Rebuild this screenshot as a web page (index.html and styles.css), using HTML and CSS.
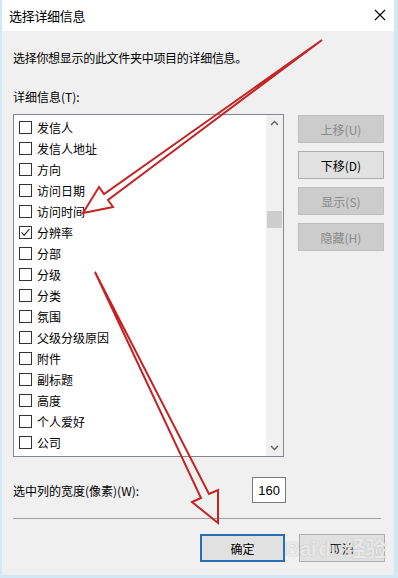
FILE: index.html
```html
<!DOCTYPE html>
<html lang="zh-CN">
<head>
    <meta charset="UTF-8">
    <title>选择详细信息</title>
    <link rel="stylesheet" href="styles.css">
</head>
<body>
    <div class="window">
        <div class="titlebar">
            <span class="title">选择详细信息</span>
            <svg class="close" width="12" height="12" viewBox="0 0 12 12">
                <path d="M1 1 L11 11 M11 1 L1 11" stroke="#000" stroke-width="1.1"/>
            </svg>
        </div>

        <div class="content">
            <p class="desc">选择你想显示的此文件夹中项目的详细信息。</p>
            <p class="label">详细信息(T):</p>

            <div class="main">
                <div class="list">
                    <ul class="items">
                        <li><span class="box"></span>发信人</li>
                        <li><span class="box"></span>发信人地址</li>
                        <li><span class="box"></span>方向</li>
                        <li><span class="box"></span>访问日期</li>
                        <li><span class="box"></span>访问时间</li>
                        <li><span class="box checked"><svg width="11" height="11" viewBox="0 0 11 11"><path d="M1.5 5.5 L4.2 8.2 L9.5 2" fill="none" stroke="#222" stroke-width="1.1"/></svg></span>分辨率</li>
                        <li><span class="box"></span>分部</li>
                        <li><span class="box"></span>分级</li>
                        <li><span class="box"></span>分类</li>
                        <li><span class="box"></span>氛围</li>
                        <li><span class="box"></span>父级分级原因</li>
                        <li><span class="box"></span>附件</li>
                        <li><span class="box"></span>副标题</li>
                        <li><span class="box"></span>高度</li>
                        <li><span class="box"></span>个人爱好</li>
                        <li><span class="box"></span>公司</li>
                    </ul>
                    <div class="scrollbar">
                        <svg class="arrow" width="17" height="17" viewBox="0 0 17 17">
                            <path d="M5 10 L8.5 6.5 L12 10" fill="none" stroke="#606060" stroke-width="1.4"/>
                        </svg>
                        <div class="track">
                            <div class="thumb"></div>
                        </div>
                        <svg class="arrow" width="17" height="17" viewBox="0 0 17 17">
                            <path d="M5 7 L8.5 10.5 L12 7" fill="none" stroke="#606060" stroke-width="1.4"/>
                        </svg>
                    </div>
                </div>

                <div class="side">
                    <button class="btn disabled">上移(U)</button>
                    <button class="btn">下移(D)</button>
                    <button class="btn disabled">显示(S)</button>
                    <button class="btn disabled">隐藏(H)</button>
                </div>
            </div>

            <div class="width-row">
                <span>选中列的宽度(像素)(W):</span>
                <input class="width-input" type="text" value="160">
            </div>

            <div class="separator"></div>

            <div class="footer">
                <button class="btn default">确定</button>
                <button class="btn">取消</button>
            </div>
        </div>

        <div class="watermark">Bai<span class="paw">du</span>经验</div>

        <svg class="marks" width="398" height="578" viewBox="0 0 398 578">
            <polygon points="322,40 108,200 113,207 83,213 99,187 104,194"
                     fill="none" stroke="#c42424" stroke-width="2" stroke-linejoin="miter"/>
            <polygon points="95,272 201,498 192,502 218,523 218,490 209,494"
                     fill="none" stroke="#c42424" stroke-width="2" stroke-linejoin="miter"/>
        </svg>
    </div>
</body>
</html>
```

FILE: styles.css
```css
body {
    margin: 0;
    font-family: "Noto Sans CJK SC", "Liberation Sans", sans-serif;
    font-size: 12px;
    color: #000;
    background-color: #d6eef8;
}
.window {
    position: relative;
    width: 398px;
    height: 578px;
    box-sizing: border-box;
    border-left: 2px solid #cfeaf6;
    border-right: 4px solid #cfeaf6;
    border-bottom: 3px solid #cfeaf6;
    background-color: #f0f0f0;
    overflow: hidden;
}
.titlebar {
    height: 31px;
    background-color: #fff;
    display: flex;
    align-items: center;
    justify-content: space-between;
    padding: 0 8px 0 7px;
}
.title {
    font-size: 13px;
    letter-spacing: -0.3px;
}
.close {
    margin-top: -1px;
}
.content {
    padding: 0 8px 0 11px;
}
p {
    margin: 0;
    line-height: 16px;
}
.desc {
    margin-top: 19px;
    letter-spacing: -0.3px;
}
.label {
    margin-top: 23px;
}
.main {
    display: flex;
    margin-top: 9px;
}
.list {
    width: 271px;
    height: 343px;
    box-sizing: border-box;
    border: 1px solid #828790;
    background-color: #fff;
    display: flex;
}
.items {
    list-style: none;
    margin: 0;
    padding: 2px 0 0 0;
    flex: 1;
}
.items li {
    height: 21px;
    display: flex;
    align-items: center;
    padding-left: 5px;
}
.box {
    width: 13px;
    height: 13px;
    box-sizing: border-box;
    border: 1px solid #333;
    background-color: #fff;
    margin-right: 5px;
    display: flex;
    align-items: center;
    justify-content: center;
}
.scrollbar {
    width: 17px;
    background-color: #f0f0f0;
    display: flex;
    flex-direction: column;
}
.track {
    flex: 1;
}
.thumb {
    margin: 79px 1px 0 1px;
    height: 17px;
    background-color: #cdcdcd;
}
.side {
    display: flex;
    flex-direction: column;
    gap: 8px;
    margin-left: 14px;
    padding-top: 1px;
}
.btn {
    width: 86px;
    height: 28px;
    box-sizing: border-box;
    border: 1px solid #adadad;
    background-color: #e1e1e1;
    font-family: "Noto Sans CJK SC", "Liberation Sans", sans-serif;
    font-size: 12px;
    color: #000;
    padding: 0;
}
.btn.disabled {
    background-color: #cccccc;
    border-color: #bfbfbf;
    color: #8a8a8a;
}
.btn.default {
    width: 85px;
    border: 2px solid #2a6fb0;
}
.width-row {
    display: flex;
    align-items: center;
    justify-content: space-between;
    margin-top: 20px;
    width: 273px;
}
.width-input {
    width: 34px;
    height: 26px;
    box-sizing: border-box;
    border: 1px solid #7a7a7a;
    background-color: #fff;
    text-align: right;
    padding: 0 5px 0 0;
    font-family: "Liberation Sans", sans-serif;
    font-size: 13px;
}
.separator {
    margin-top: 15px;
    width: 368px;
    height: 1px;
    background-color: #a0a0a0;
}
.footer {
    display: flex;
    justify-content: flex-end;
    gap: 14px;
    margin-top: 15px;
    padding-right: 1px;
}
.watermark {
    position: absolute;
    left: 283px;
    top: 532px;
    font-family: "Liberation Sans", "Noto Sans CJK SC", sans-serif;
    font-size: 21px;
    font-weight: bold;
    color: rgba(255, 255, 255, 0.75);
    text-shadow: 0 0 1px rgba(120, 120, 120, 0.6);
    letter-spacing: -0.5px;
}
.paw {
    margin: 0 2px;
}
.marks {
    position: absolute;
    left: -2px;
    top: 0;
    pointer-events: none;
}
```
